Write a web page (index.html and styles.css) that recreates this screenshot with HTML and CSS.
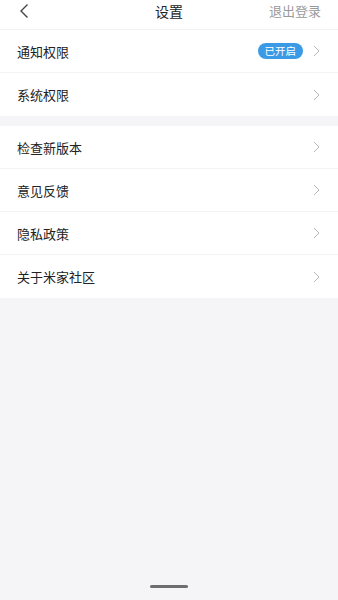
FILE: index.html
```html
<!DOCTYPE html>
<html lang="zh-CN">
<head>
    <meta charset="UTF-8">
    <meta name="viewport" content="width=device-width, initial-scale=1.0">
    <title>设置</title>
    <link rel="stylesheet" href="styles.css">
</head>
<body>
    <div class="header">
        <svg class="back" width="12" height="16" viewBox="0 0 12 16">
            <path d="M9.5 1.5 L3 8 L9.5 14.5" fill="none" stroke="#444" stroke-width="1.4"/>
        </svg>
        <div class="title">设置</div>
        <div class="logout">退出登录</div>
    </div>

    <div class="group">
        <div class="row">
            <span class="label">通知权限</span>
            <span class="badge">已开启</span>
            <svg class="arrow" width="7" height="12" viewBox="0 0 7 12"><path d="M1 1 L6 6 L1 11" fill="none" stroke="#b8b8bb" stroke-width="1"/></svg>
        </div>
        <div class="row">
            <span class="label">系统权限</span>
            <svg class="arrow" width="7" height="12" viewBox="0 0 7 12"><path d="M1 1 L6 6 L1 11" fill="none" stroke="#b8b8bb" stroke-width="1"/></svg>
        </div>
    </div>

    <div class="group">
        <div class="row">
            <span class="label">检查新版本</span>
            <svg class="arrow" width="7" height="12" viewBox="0 0 7 12"><path d="M1 1 L6 6 L1 11" fill="none" stroke="#b8b8bb" stroke-width="1"/></svg>
        </div>
        <div class="row">
            <span class="label">意见反馈</span>
            <svg class="arrow" width="7" height="12" viewBox="0 0 7 12"><path d="M1 1 L6 6 L1 11" fill="none" stroke="#b8b8bb" stroke-width="1"/></svg>
        </div>
        <div class="row">
            <span class="label">隐私政策</span>
            <svg class="arrow" width="7" height="12" viewBox="0 0 7 12"><path d="M1 1 L6 6 L1 11" fill="none" stroke="#b8b8bb" stroke-width="1"/></svg>
        </div>
        <div class="row">
            <span class="label">关于米家社区</span>
            <svg class="arrow" width="7" height="12" viewBox="0 0 7 12"><path d="M1 1 L6 6 L1 11" fill="none" stroke="#b8b8bb" stroke-width="1"/></svg>
        </div>
    </div>

    <div class="home-bar"></div>
</body>
</html>
```

FILE: styles.css
```css
body {
    margin: 0;
    width: 338px;
    height: 600px;
    background-color: #f5f5f8;
    font-family: "Noto Sans CJK SC", "Noto Sans", sans-serif;
    color: #222;
    position: relative;
    overflow: hidden;
}
.header {
    height: 29px;
    background-color: #ffffff;
    display: flex;
    align-items: flex-start;
    position: relative;
    border-bottom: 1px solid #f2f2f4;
}
.back {
    margin-left: 18px;
    margin-top: 3px;
}
.title {
    position: absolute;
    left: 0;
    right: 0;
    top: 0;
    line-height: 22px;
    text-align: center;
    font-size: 14px;
    color: #222;
    pointer-events: none;
}
.logout {
    margin-left: auto;
    margin-right: 17px;
    font-size: 13px;
    color: #9a9a9a;
    line-height: 22px;
}
.group {
    background-color: #ffffff;
    margin-bottom: 10px;
}
.row {
    height: 43px;
    box-sizing: border-box;
    display: flex;
    align-items: center;
    padding: 0 18px 0 17px;
    border-bottom: 1px solid #f3f3f5;
}
.row:last-child {
    border-bottom: none;
}
.label {
    font-size: 13px;
    color: #222;
    flex: 1;
}
.badge {
    background-color: #3a9ae6;
    color: #ffffff;
    font-size: 10.5px;
    line-height: 16px;
    height: 16px;
    padding: 0 7px;
    border-radius: 8px;
    margin-right: 10px;
}
.arrow {
    display: block;
}
.home-bar {
    position: absolute;
    left: 150px;
    bottom: 12px;
    width: 38px;
    height: 3px;
    border-radius: 2px;
    background-color: #6e6e72;
}
```
